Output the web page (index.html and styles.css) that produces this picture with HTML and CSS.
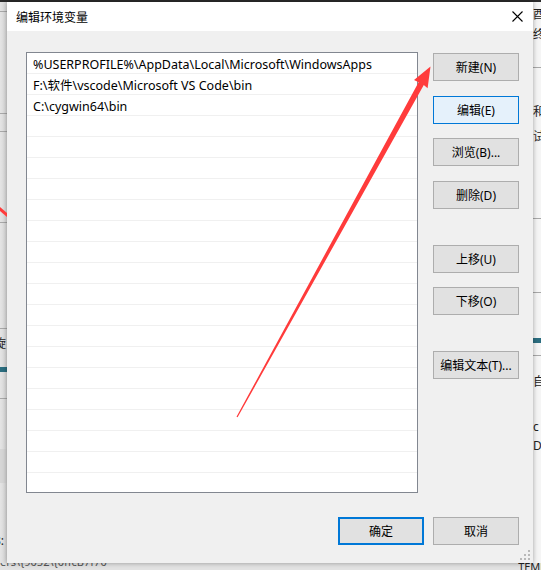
FILE: index.html
```html
<!DOCTYPE html>
<html lang="zh-CN">
<head>
  <meta charset="UTF-8">
  <meta name="viewport" content="width=device-width, initial-scale=1.0">
  <title>编辑环境变量</title>
  <link rel="stylesheet" href="styles.css">
</head>
<body>

  <div class="screen">
    <div class="top-line"></div>

    <div class="desk">
      <!-- 左侧露出的背景窗口 -->
      <div class="side side-left">
        <div class="bg-line" style="margin-top: 9px"></div>
        <div class="bg-line" style="margin-top: 101px"></div>
        <div class="bg-line" style="margin-top: 17px"></div>
        <div class="bg-line" style="margin-top: 90px"></div>
        <div class="bg-line" style="margin-top: 105px"></div>
        <div class="bg-text">旋</div>
        <div class="bg-teal" style="margin-top: 16px"></div>
        <div class="bg-line" style="margin-top: 26px"></div>
        <div class="bg-grey"></div>
        <div class="bg-text" style="margin-top: 51px">8:</div>
      </div>

      <div class="dialog">
        <div class="title-bar">
          <span class="title">编辑环境变量</span>
          <svg class="close" width="11" height="11" viewBox="0 0 11 11">
            <path d="M0.5 0.5 L10.5 10.5 M10.5 0.5 L0.5 10.5" stroke="#000" stroke-width="1.1" fill="none"/>
          </svg>
        </div>

        <div class="dialog-body">
          <div class="main">
            <div class="path-list" id="path-list"></div>

            <div class="side-buttons">
              <a class="btn">新建(N)</a>
              <a class="btn focus sp15">编辑(E)</a>
              <a class="btn">浏览(B)...</a>
              <a class="btn sp15">删除(D)</a>
              <a class="btn sp36">上移(U)</a>
              <a class="btn">下移(O)</a>
              <a class="btn sp36">编辑文本(T)...</a>
            </div>
          </div>

          <div class="footer">
            <a class="btn default">确定</a>
            <a class="btn">取消</a>
          </div>
        </div>

        <svg class="grip" width="10" height="10" viewBox="0 0 10 10">
          <rect x="8" y="0" width="2" height="2" fill="#b8b8b8"/>
          <rect x="4" y="4" width="2" height="2" fill="#b8b8b8"/>
          <rect x="8" y="4" width="2" height="2" fill="#b8b8b8"/>
          <rect x="0" y="8" width="2" height="2" fill="#b8b8b8"/>
          <rect x="4" y="8" width="2" height="2" fill="#b8b8b8"/>
          <rect x="8" y="8" width="2" height="2" fill="#b8b8b8"/>
        </svg>
      </div>

      <!-- 右侧露出的背景窗口 -->
      <div class="side side-right">
        <div class="bg-text" style="margin-top: 6px">酉</div>
        <div class="bg-text" style="margin-top: 6px">终</div>
        <div class="bg-line" style="margin-top: 25px"></div>
        <div class="bg-text" style="margin-top: 37px">和</div>
        <div class="bg-text" style="margin-top: 11px">试</div>
        <div class="bg-line" style="margin-top: 74px"></div>
        <div class="bg-line" style="margin-top: 73px"></div>
        <div class="bg-teal" style="margin-top: 45px"></div>
        <div class="bg-line" style="margin-top: 12px"></div>
        <div class="bg-text" style="margin-top: 19px">自</div>
        <div class="bg-text" style="margin-top: 31px">c</div>
        <div class="bg-text" style="margin-top: 5px">D</div>
      </div>
    </div>

    <div class="bottom-strip">
      <span class="bg-small">ers\{9052\{0ffcB7f70</span>
      <span class="bottom-temp">TEMP</span>
    </div>

    <!-- 红色标注箭头 -->
    <svg class="arrow" width="541" height="570" viewBox="0 0 541 570">
      <polygon points="0,207 7,213 7,217 0,211" fill="#ff3b3b"/>
      <polygon points="430.5,66.5 414,80 418.6,82.2 236.5,416.8 237.6,417.3 423.8,85 427.6,88.2" fill="#ff3b3b"/>
    </svg>
  </div>

  <script>
    // 路径列表数据
    const paths = [
      '%USERPROFILE%\\AppData\\Local\\Microsoft\\WindowsApps',
      'F:\\软件\\vscode\\Microsoft VS Code\\bin',
      'C:\\cygwin64\\bin'
    ];

    const list = document.getElementById('path-list');
    for (let i = 0; i < 21; i++) {
      const row = document.createElement('div');
      row.className = 'row';
      row.textContent = paths[i] || '';
      list.appendChild(row);
    }
  </script>

</body>
</html>
```

FILE: styles.css
```css
body {
  margin: 0;
  padding: 0;
  font-family: "Noto Sans", "Noto Sans CJK SC", sans-serif;
  font-size: 12px;
  color: black;
  background-color: #e8e8e8;
  overflow: hidden;
}

.screen {
  position: relative;
  width: 541px;
  height: 570px;
  overflow: hidden;
  display: flex;
  flex-direction: column;
}

.top-line {
  height: 2px;
  background-color: #2b2b2b;
}

.desk {
  display: flex;
  height: 561px;
}

/* 背景窗口的碎片 */
.side {
  display: flex;
  flex-direction: column;
  overflow: hidden;
  white-space: nowrap;
}

.side-left {
  width: 7px;
  background: linear-gradient(to right, #e4e4e4, #d9d9d9);
}

.side-right {
  width: 8px;
  background-color: #f5f5f5;
}

.bg-line {
  height: 1px;
  background-color: #a8a8a8;
  flex: none;
}

.bg-text {
  font-size: 12px;
  line-height: 14px;
  color: #222;
  flex: none;
}

.side-left .bg-text {
  margin-left: -6px;
  margin-top: 8px;
}

.bg-teal {
  height: 5px;
  background-color: #2c6e80;
  margin-top: 6px;
  flex: none;
}

.bg-grey {
  height: 34px;
  margin-top: 50px;
  background-color: #d6d6d6;
  flex: none;
}

.bottom-strip {
  flex: 1;
  display: flex;
  align-items: flex-start;
  justify-content: space-between;
  background-color: #e2e2e2;
  overflow: hidden;
  font-size: 11px;
  line-height: 8px;
}

.bg-small {
  color: #555;
  margin-top: -5px;
}

.bottom-temp {
  color: #222;
  margin-right: -6px;
  margin-top: 0;
}

/* 对话框 */
.dialog {
  position: relative;
  width: 526px;
  display: flex;
  flex-direction: column;
  background-color: #f0f0f0;
  box-shadow: 0 0 5px rgba(0, 0, 0, 0.35);
  z-index: 1;
}

.title-bar {
  height: 29px;
  background-color: white;
  display: flex;
  align-items: center;
  justify-content: space-between;
  padding: 0 10px 0 9px;
}

.title {
  font-family: "Noto Sans CJK SC", sans-serif;
  font-size: 12px;
}

.dialog-body {
  flex: 1;
  padding: 21px 14px 18px 19px;
  display: flex;
  flex-direction: column;
}

.main {
  display: flex;
  gap: 15px;
}

.path-list {
  width: 390px;
  height: 439px;
  background-color: white;
  border: 1px solid #828790;
  overflow: hidden;
}

.row {
  height: 18px;
  padding-top: 2px;
  line-height: 20px;
  font-size: 12.5px;
  border-bottom: 1px solid #f0f0f0;
  padding-left: 6px;
  white-space: nowrap;
}

.side-buttons {
  display: flex;
  flex-direction: column;
  padding-top: 1px;
}

.btn {
  width: 84px;
  height: 26px;
  display: flex;
  align-items: center;
  justify-content: center;
  background-color: #e1e1e1;
  border: 1px solid #adadad;
  margin-top: 14px;
  white-space: nowrap;
}

.side-buttons .btn:first-child {
  margin-top: 0;
}

.btn.sp15 {
  margin-top: 15px;
}

.btn.sp36 {
  margin-top: 36px;
}

.btn.focus {
  background-color: #e5f1fb;
  border-color: #0078d7;
}

.btn.default {
  width: 82px;
  height: 24px;
  border: 2px solid #0078d7;
}

.footer {
  display: flex;
  justify-content: flex-end;
  gap: 9px;
  margin-top: 24px;
}

.footer .btn {
  margin-top: 0;
}

.grip {
  position: absolute;
  right: 3px;
  bottom: 3px;
}

.arrow {
  position: absolute;
  top: 0;
  left: 0;
  pointer-events: none;
  z-index: 2;
}
```
